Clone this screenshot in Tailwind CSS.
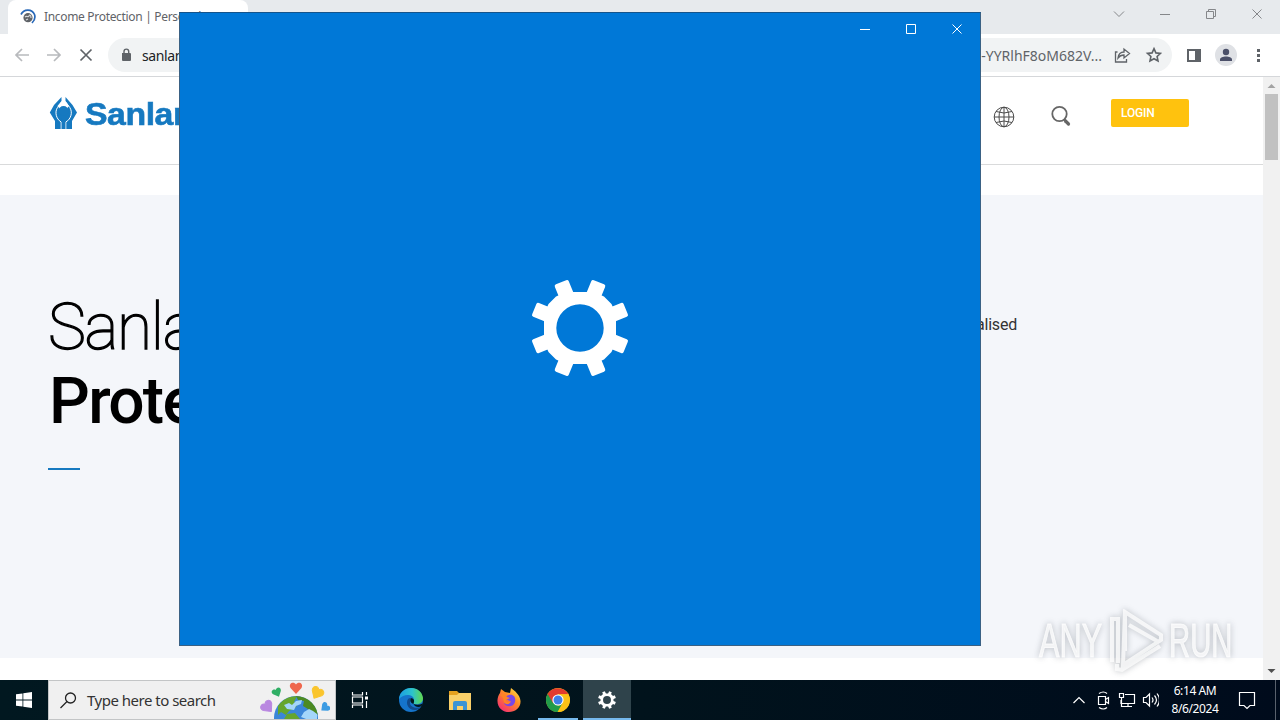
<!DOCTYPE html>
<html lang="en">
<head>
<meta charset="utf-8">
<title>Desktop</title>
<script src="https://cdn.jsdelivr.net/npm/@tailwindcss/browser@4"></script>
</head>
<body class="relative flex h-[720px] w-[1280px] flex-col overflow-hidden bg-white font-['Noto_Sans',sans-serif]">

<!-- Browser tab strip -->
<header class="flex h-[34px] shrink-0 items-stretch justify-between bg-[#e7eaed]">
  <div class="ml-2 flex w-60 items-center gap-2 rounded-t-lg bg-white pl-3">
    <svg class="size-4 shrink-0" viewBox="0 0 16 16" fill="none"><circle cx="8" cy="8.7" r="4.6" fill="#5f6368"/><path d="M5 8c2-2 3 1 4-1s2 0 2 2M6 11l2-1" stroke="#d4d6d9" stroke-width="1.2"/><path d="M1 5.5C4-.5 12 0 14.500 5.500c1 3 0 6-2.500 8.500" stroke="#2868b8" stroke-width="1.700"/></svg>
    <span class="whitespace-nowrap text-[12px] tracking-[-0.32px] text-[#5f6368]">Income Protection | Personal</span>
  </div>
  <svg class="h-[28px] w-[180px]" viewBox="0 0 180 28" fill="none" stroke="#85878a" stroke-width="1"><path d="M14 11.500l5 5 5-5M60 14.500h10M106.500 11.500h7v7h-7zM108.500 11.500v-2h7v7h-2M152.500 9.500l9 9M161.500 9.500l-9 9"/></svg>
</header>

<!-- Toolbar -->
<nav class="flex h-[43px] shrink-0 items-center border-b border-[#d5d7da] bg-white pl-3.5">
  <svg class="h-5 w-[80px] shrink-0" viewBox="0 0 80 20" fill="none" stroke-width="1.700"><path d="M15 10H2M8 4l-6 6 6 6M33 10h13M40 4l6 6-6 6" stroke="#b8babd"/><path d="M66.500 4.500l11 11M77.500 4.500l-11 11" stroke="#5f6368"/></svg>
  <div class="ml-3.5 flex h-[34px] w-[1064px] shrink-0 items-center rounded-full bg-[#f1f3f4] pl-3 pr-2.5 text-[14px]">
    <svg class="h-4 w-3 shrink-0" viewBox="0 0 12 16"><path d="M2 6h8q1 0 1 1v6q0 1-1 1H3q-1 0-1-1V7z" fill="#5f6368"/><path d="M4 7V4.500a2.300 2.300 0 0 1 4.700 0V7" fill="none" stroke="#5f6368" stroke-width="1.400"/></svg>
    <span class="ml-2.5 tracking-[-0.4px] text-[#202124]">sanlam</span>
    <span class="ml-auto flex w-[124px] justify-end whitespace-nowrap text-[14px] tracking-[0px] text-[#5f6368]">o-YYRlhF8oM682V...</span>
    <svg class="ml-[10px] h-5 w-[50px] shrink-0" viewBox="0 0 50 20" fill="none" stroke="#5f6368" stroke-width="1.300"><path d="M5.500 7H3.500v10h11v-3"/><path d="M6 13c.5-4 3-6 6-6V4l5.500 4.500L12 13v-3c-3 0-4.500 1-6 3z"/><path d="M42 3.700l1.900 4.200 4.600.5-3.400 3.100.9 4.500-4-2.300-4 2.300.9-4.500-3.400-3.100 4.600-.5z" stroke-width="1.600"/></svg>
  </div>
  <svg class="ml-3 h-6 w-[90px] shrink-0" viewBox="0 0 90 24"><path d="M4 7h12v11H4z" fill="#fff" stroke="#5f6368" stroke-width="2"/><path d="M11 6h6v13h-6z" fill="#5f6368"/><circle cx="42" cy="12" r="11" fill="#dfe1e5"/><circle cx="42" cy="9" r="3.200" fill="#4b5069"/><path d="M36 18v-1.500c0-4 12-4 12 0V18z" fill="#4b5069"/><path d="M73 6h3v3h-3zM73 11h3v3h-3zM73 16h3v3h-3z" fill="#5f6368"/></svg>
</nav>

<!-- Web page -->
<div class="flex h-[603px] shrink-0">
  <main class="flex w-[1263px] flex-col font-[Roboto,sans-serif]">
    <div class="flex h-[88px] shrink-0 items-start border-b border-[#d9dadb] pl-[49px]">
      <svg class="mt-[19px] h-[34px] w-7" viewBox="0 0 28 34" fill="#1679c0"><path d="M12.500 1L5 9 .8 16.500 6 25v8h17v-8l5-8.500L23.500 9 16.500 1v4L20 10l-2 2.500-7.500 0L8.500 10 12.500 5z"/><path d="M12.200 33v-7C7 23 5.500 16 8.500 11.500l4.500-6M16.800 33v-7c5.500-3 7-10 4-14.500l-4.500-6" fill="none" stroke="#fff" stroke-width="1"/><path d="M14.500 5l-4 5 4 4 4-4z" fill="#fff"/><path d="M12.700 22h3.600v11h-3.600z"/><circle cx="14.500" cy="15" r="5"/></svg>
      <span class="ml-2 mt-[15px] w-[130px]"><span class="inline-block origin-left scale-x-[1.09] font-['Liberation_Sans',sans-serif] text-[31px] font-bold leading-[46px] tracking-[-0.4px] text-[#1679c0] [-webkit-text-stroke:0.6px_#1679c0]">Sanlam</span></span>
      <svg class="ml-[778px] mt-[29px] size-[22px] shrink-0" viewBox="0 0 22 22" fill="none" stroke="#4b4b4b"><circle cx="11" cy="11" r="9.800"/><ellipse cx="11" cy="11" rx="5" ry="9.800"/><path d="M11 1v20M1 11h20M3 5.500q8 3 16 0M3 16.500q8-3 16 0"/></svg>
      <svg class="ml-[35px] mt-[28px] size-[22px] shrink-0" viewBox="0 0 22 22" fill="none" stroke="#666"><circle cx="9.500" cy="9" r="7.200" stroke-width="1.800"/><path d="M14 14l2 2" stroke-width="2"/><path d="M15.500 16l3 3" stroke-width="3.200" stroke-linecap="round"/></svg>
      <span class="ml-[39px] mt-[22px] h-7 w-[78px] rounded-[2px] bg-[#ffc20e] pl-2.5 text-[12px] font-medium leading-7 tracking-[-0.2px] text-white">LOGIN</span>
    </div>
    <div class="mt-[30px] flex h-[463px] shrink-0 justify-between bg-[#f4f6fa]">
      <div class="pl-12 pt-[96px] text-black">
        <h1 class="text-[64px] leading-[74px]"><span class="block font-thin tracking-[-1.3px] [-webkit-text-stroke:1.3px_black]">Sanlam</span><span class="block pl-px font-medium tracking-[-1.7px]">Protection</span></h1>
        <div class="mt-[29px] h-0.5 w-8 bg-[#1679c0]"></div>
      </div>
      <p class="mr-[246px] pt-[118px] text-[16px] leading-6 tracking-[-0.2px] text-[#333]">personalised</p>
    </div>
  </main>
  <aside class="flex w-[17px] flex-col items-center bg-[#f1f1f1]">
    <svg class="h-[17px] w-[17px] shrink-0" viewBox="0 0 17 17"><path d="M4.500 11l4-4 4 4z" fill="#a3a3a3"/></svg>
    <div class="h-[66px] w-[13px] bg-[#c1c1c1]"></div>
    <svg class="mt-auto size-[17px] shrink-0" viewBox="0 0 17 17"><path d="M4.500 6l4 4 4-4z" fill="#505050"/></svg>
  </aside>
</div>

<!-- Taskbar -->
<footer class="flex h-10 shrink-0 items-stretch bg-linear-to-r from-[#011820] via-[#01131c] to-[#000b1c]">
  <div class="flex w-12 items-center justify-center"><svg class="size-4" viewBox="0 0 16 16" fill="#fff"><path d="M0 2.300L6.500 1.400v6.200H0zM7.300 1.200L16 0v7.600H7.300zM0 8.400h6.500v6.200L0 13.700zM7.300 8.400H16V16l-8.700-1.200z"/></svg></div>
  <div class="flex w-72 items-center border border-[#c3c5c6] bg-[#f0f0f0] pl-[11px]">
    <svg class="size-[17px]" viewBox="0 0 17 17" fill="none" stroke="#222" stroke-width="1.300"><circle cx="10.500" cy="6" r="5"/><path d="M7 9.500L.5 16"/></svg>
    <span class="ml-2.5 whitespace-nowrap text-[15px] tracking-[-0.5px] text-[#333]">Type here to search</span>
    <svg class="ml-auto mr-[5px] h-[38px] w-[70px] shrink-0" viewBox="0 0 70 38"><defs><clipPath id="globe"><circle cx="36" cy="37" r="22"/></clipPath></defs><circle cx="36" cy="37" r="22" fill="#3b86d8"/><g clip-path="url(#globe)"><path d="M18 25c5-7 11-10 19-10l-3 6 5 1-4 5-6 3-3 4-5-3-3 3z" fill="#65a52e"/><path d="M36 15c12-1 21 9 22 18l-5 5-6-4 1-6-5-3 1-5-6-1z" fill="#4c8a22"/><path d="M24 38l3-5 8-1 5 6z" fill="#65a52e"/><path d="M24 24l5-2 3 2 4-4 6-1-1 4-5 2-2 4-7-1zM44 31l5-3 4 2 4 3v5H46l-5-2z" fill="#a4d6fa"/></g><g id="hearts"><path d="M36 13L30.500 7C28 2 34 0 36 3.500 38 0 44 2 41.500 7z" fill="#ef674d"/><path transform="translate(17 11.500) rotate(-25) scale(.78)" d="M0 6L-5.500 0C-8-5-2-7 0-3.500 2-7 8-5 5.500 0z" fill="#2fae64"/><path transform="translate(57 12) rotate(30)" d="M0 6L-5.500 0C-8-5-2-7 0-3.500 2-7 8-5 5.500 0z" fill="#fac52d" stroke="#fac52d" stroke-linejoin="round"/><path transform="translate(7.500 26) rotate(-40)" d="M0 6L-5.500 0C-8-5-2-7 0-3.500 2-7 8-5 5.500 0z" fill="#b987e0" stroke="#b987e0" stroke-linejoin="round"/><path transform="translate(65 26.500) rotate(50) scale(.8)" d="M0 6L-5.500 0C-8-5-2-7 0-3.500 2-7 8-5 5.500 0z" fill="#3d9ce3"/></g></svg>
  </div>
  <div class="flex w-12 items-center justify-center"><svg class="size-[18px]" viewBox="0 0 18 18" fill="none" stroke="#fff" stroke-width="1.200"><path d="M1.500 1v3h10V1M1.500 17v-3h10v3M1.500 6h10v6h-10zM15.500 1v3M15.500 10v7"/><path d="M14 5.500h3v3h-3z" fill="#fff" stroke="none"/></svg></div>
  <div class="ml-[3px] flex w-12 items-center justify-center"><svg class="size-6" viewBox="0 0 24 24"><defs><linearGradient id="e1" x2="1"><stop stop-color="#1b9de2"/><stop offset=".55" stop-color="#2cc3cd"/><stop offset="1" stop-color="#62d94b"/></linearGradient></defs><circle cx="12" cy="12" r="12" fill="#1574cb"/><path d="M0 11C1-3 22-4 24 10c0 5-4 7-9 6-2-1-1-2 0-4 0-6-10-7-15-1z" fill="url(#e1)"/><path d="M9 11c-3 5 1 12 8 11 2-.5 4-2 5-3-5 2-11 0-11-4 0-2 1-3 1-5-1 0-2 0-3 1z" fill="#114a8b"/><path d="M14.500 16c-3-1-4-4-2-6 3 1 3 3 2 6 3 1 6 1 9-.5l-.8 2.500c-3 2-7 1-8.200-2z" fill="#01171f"/></svg></div>
  <div class="ml-px flex w-12 items-center justify-center"><svg class="h-[19px] w-[22px]" viewBox="0 0 22 19"><path d="M0 0h8l2 2h11v5H0z" fill="#e5a11f"/><path d="M0 4h8l2-2h12v17H0z" fill="#f9d069"/><path d="M4 19v-7q0-2 2-2h10q2 0 2 2v7h-4v-4H8v4z" fill="#3a94d4"/></svg></div>
  <div class="ml-px flex w-12 items-center justify-center"><svg class="size-6" viewBox="0 0 24 24"><defs><linearGradient id="f1" x1="1" x2=".2" y2="1"><stop stop-color="#fff04b"/><stop offset=".45" stop-color="#ff8c24"/><stop offset="1" stop-color="#f52d73"/></linearGradient></defs><path d="M3 5l1-4 4 3 5 1 1-5c4 3 9 7 9.500 13C24 20 18 24 12 24S0 20 .5 12C.7 9 1.500 7 3 5z" fill="url(#f1)"/><path d="M12 7c5-1 7 3 6 7-1 5-9 6-11 1 3 1 6 0 6-2l-5-2c0-2 1-3 4-4z" fill="#7747e8"/><path d="M3 7c3-2 6 0 7 2l3 1-4 2c0 2 3 3 5 1-1 4-6 4-7 1-1-3 0-4-4-7z" fill="#ff8424"/></svg></div>
  <div class="ml-px flex w-12 flex-col items-center justify-between"><svg class="mt-2 size-6" viewBox="0 0 24 24"><circle cx="12" cy="12" r="12" fill="#fbc116"/><path d="M12 12L1.600 6A12 12 0 0 0 11 24z" fill="#219b4a"/><path d="M1.600 6A12 12 0 0 1 22.400 6.300H12L7 15z" fill="#e33b2e"/><path d="M7.100 14.800A5.600 5.600 0 0 0 16.900 14.800L11.500 24Q4 24 1 17z" fill="#219b4a"/><path d="M16.900 14.800L12 24A12 12 0 0 0 22.400 6.300H12z" fill="#fbc116"/><circle cx="12" cy="12" r="5.600" fill="#fff"/><circle cx="12" cy="12" r="4.500" fill="#3e7fe8"/></svg><div class="h-0.5 w-10 bg-[#76b9ed]"></div></div>
  <div class="ml-px flex w-12 flex-col items-center justify-between bg-[#2f434b]"><svg class="mt-[11px] size-[18px]" viewBox="-50 -50 100 100" fill="#fff"><path fill-rule="evenodd" d="M-15-36h30l10 6 6 5 5 10v30l-5 10-6 6-10 5h-30l-10-5-6-6-5-10v-30l5-10 6-5zM-22 0a22 22 0 1 0 44 0a22 22 0 1 0-44 0"/><path d="M-8-50H8v18H-8zM-8 32H8v18H-8z" transform="rotate(22.5)"/><path d="M-8-50H8v18H-8zM-8 32H8v18H-8z" transform="rotate(67.500)"/><path d="M-8-50H8v18H-8zM-8 32H8v18H-8z" transform="rotate(112.500)"/><path d="M-8-50H8v18H-8zM-8 32H8v18H-8z" transform="rotate(157.500)"/></svg><div class="h-0.5 w-12 bg-[#76b9ed]"></div></div>
  <svg class="ml-auto h-10 w-[90px]" viewBox="-1 0 90 40" fill="none" stroke="#fff" stroke-width="1.200"><path d="M3.500 23l5.500-5.500 5.500 5.500"/><path d="M28.500 16.500h7v8h-7zM35.500 19.500l3-2v6l-3-2M29 13.500q4.500-3 8 0M29 27.500q4.500 3 8 0"/><path d="M55 14.500h9.500v9H51V20M58 23.500v3M53 26.500h9M49.500 13.500h4v4h-4zM51.500 17.500v9H54"/><path d="M73.500 17.500H76l3.500-3.500v12L76 22.500h-2.500zM82 17.500q2 2.500 0 5M84.500 15.500q4 4.500 0 9M87 13.500q5 6.500 0 13"/></svg>
  <div class="ml-[4px] w-[64px] pt-[2px] text-center text-[12px] leading-[18px] tracking-[-0.4px] text-white"><div>6:14 AM</div><div>8/6/2024</div></div>
  <svg class="ml-[9px] h-10 w-[44px]" viewBox="0 0 44 40" fill="none"><path d="M3.500 12.500h15v13H14l-3 3-3-3H3.500z" stroke="#fff" stroke-width="1.200"/><path d="M39.500 0v40" stroke="#59616d"/></svg>
</footer>

<!-- Settings splash window -->
<section class="absolute left-[179px] top-3 flex h-[634px] w-[802px] flex-col border border-[#3a6184] border-t-[#15548b] bg-[#0078d7]">
  <svg class="h-8 w-[138px] shrink-0 self-end" viewBox="0 0 138 32" fill="none" stroke="#fff"><path d="M18 16.500h10M64.500 11.500h9v9h-9zM110.500 11.500l9 9M119.500 11.500l-9 9"/></svg>
  <svg class="mx-auto mt-[233px] size-[100px]" viewBox="-50 -50 100 100" fill="#fff"><path fill-rule="evenodd" d="M-14-36h28l10 4.500 7.500 7.500L36-14v28l-4.500 10-7.500 7.500L14 36h-28l-10-4.500-7.500-7.500L-36 14v-28l4.500-10 7.500-7.500zM-23.700 0a23.700 23.700 0 1 0 47.400 0a23.700 23.700 0 1 0-47.400 0"/><g><rect x="-7.500" y="-49.500" width="15" height="18" rx="2" transform="rotate(22.5)"/><rect x="-7.500" y="-49.500" width="15" height="18" rx="2" transform="rotate(67.500)"/><rect x="-7.500" y="-49.500" width="15" height="18" rx="2" transform="rotate(112.500)"/><rect x="-7.500" y="-49.500" width="15" height="18" rx="2" transform="rotate(157.500)"/><rect x="-7.500" y="-49.500" width="15" height="18" rx="2" transform="rotate(202.500)"/><rect x="-7.500" y="-49.500" width="15" height="18" rx="2" transform="rotate(247.500)"/><rect x="-7.500" y="-49.500" width="15" height="18" rx="2" transform="rotate(292.500)"/><rect x="-7.500" y="-49.500" width="15" height="18" rx="2" transform="rotate(337.500)"/></g></svg>
</section>

<!-- Watermark -->
<div class="absolute left-[1039px] top-[607px] flex h-[68px] w-[200px] items-center font-['Liberation_Sans',sans-serif] text-[48px] leading-none text-white/75 drop-shadow-[0_0_3px_rgba(70,80,90,0.45)]">
  <span class="w-[66px] shrink-0"><span class="inline-block origin-left scale-x-[.64] [-webkit-text-stroke:1px_rgba(255,255,255,0.75)]">ANY</span></span>
  <svg class="h-[64px] w-[62px] shrink-0" viewBox="0 0 62 64" fill="none" stroke="#fff" stroke-opacity=".75" stroke-width="4"><path d="M12 10H7v43M20 3l36 23v5L18 56zM20 3v39M13 8v46M24 16l28 16M12 55v5l5 1 38-24"/></svg>
  <span class="ml-[2px] w-[66px] shrink-0"><span class="inline-block origin-left scale-x-[.61] [-webkit-text-stroke:1px_rgba(255,255,255,0.75)]">RUN</span></span>
</div>
</body>
</html>
